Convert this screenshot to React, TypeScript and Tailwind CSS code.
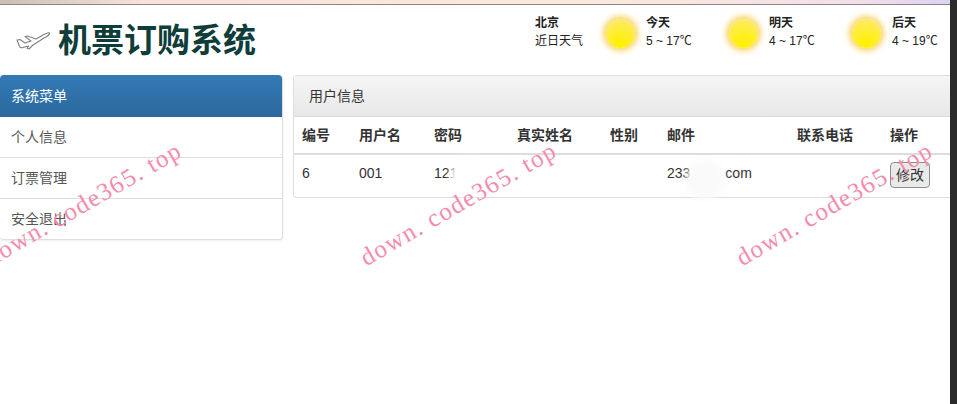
const cjk = "font-['Liberation_Sans','Noto_Sans_CJK_SC',sans-serif]";

const columns = [
  { label: "编号", width: "w-[57px]" },
  { label: "用户名", width: "w-[75px]" },
  { label: "密码", width: "w-[83px]" },
  { label: "真实姓名", width: "w-[93px]" },
  { label: "性别", width: "w-[57px]" },
  { label: "邮件", width: "w-[130px]" },
  { label: "联系电话", width: "w-[93px]" },
  { label: "操作", width: "w-[60px]" },
];

const forecast = [
  { day: "今天", temp: "5 ~ 17℃", width: "w-[123px]" },
  { day: "明天", temp: "4 ~ 17℃", width: "w-[123px]" },
  { day: "后天", temp: "4 ~ 19℃", width: "w-[100px]" },
];

const Sun = () => (
  <div className="w-[29px] h-[29px] shrink-0 rounded-full bg-[radial-gradient(circle_at_50%_85%,#fff000_0%,#ffee30_45%,#fbe880_100%)] shadow-[0_0_6px_3px_#f6d468]" />
);

const Watermark = ({ className }: { className: string }) => (
  <div
    className={`absolute whitespace-nowrap font-['Liberation_Serif',serif] text-[25px] leading-none tracking-[1.4px] text-[#f58cab] -rotate-[30deg] origin-center ${className}`}
  >
    down. code365. top
  </div>
);

const App = () => {
  return (
    <div className={`relative flex w-[957px] h-[404px] overflow-hidden bg-white ${cjk}`}>
      <div className="flex flex-col w-[950px] shrink-0">
        <div className="h-[5px] shrink-0 border-b border-[#8d8380] bg-[linear-gradient(90deg,#c9bfb6_0%,#f8e2da_15%,#fbeadb_60%,#f3dfe8_90%,#dcd2f2_100%)]" />

        <header className="flex h-[70px] shrink-0">
          <div className="flex items-center pl-[16px] pt-[1px] w-[535px] shrink-0">
            <svg width="34" height="22" viewBox="0 0 34 22" fill="#fff" stroke="#808080" strokeWidth="1.1" strokeLinejoin="round">
              <path d="M1 10 L4 9.5 L9 13 L15 11 L9 6.5 L11.5 6 L20 9 L28 4.5 C30 3.4 33 2.5 33.5 3 C34 4 31 6.5 28 8 L17 15 L13 19 L11 18.5 L12.5 16 L7 17.5 C5.5 18 4 17.5 3.5 16.5 Z" />
            </svg>
            <h1 className="ml-[8px] text-[33px] leading-none font-bold text-[#0e3d3a]">机票订购系统</h1>
          </div>
          <div className="flex pt-[9px] text-[12px] leading-[18px] text-[#222]">
            <div className="w-[71px]">
              <p className="font-bold">北京</p>
              <p>近日天气</p>
            </div>
            {forecast.map((item) => (
              <div key={item.day} className={`flex ${item.width}`}>
                <div className="pt-[5px]">
                  <Sun />
                </div>
                <div className="ml-[11px]">
                  <p className="font-bold">{item.day}</p>
                  <p>{item.temp}</p>
                </div>
              </div>
            ))}
          </div>
        </header>

        <main className="flex items-start">
          <aside className="w-[283px] shrink-0 rounded-[4px] border-r border-b border-[#dddddd] shadow-[0_1px_2px_rgba(0,0,0,0.08)] text-[14px]">
            <div className="flex items-center h-[42px] pl-[11px] rounded-t-[4px] text-white bg-[linear-gradient(180deg,#337ab7_0%,#2b689c_100%)]">
              系统菜单
            </div>
            {["个人信息", "订票管理", "安全退出"].map((item, index) => (
              <div
                key={item}
                className={`flex items-center pl-[11px] text-[#555] ${index < 2 ? "h-[41px] border-b border-[#dddddd]" : "h-[40px]"}`}
              >
                {item}
              </div>
            ))}
          </aside>

          <section className="ml-[10px] flex-1 rounded-l-[4px] border-l border-t border-b border-[#dddddd] text-[14px] text-[#333]">
            <div className="flex items-center h-[41px] pl-[15px] bg-[linear-gradient(180deg,#f5f5f5_0%,#e8e8e8_100%)] border-b border-[#dddddd]">
              用户信息
            </div>
            <div className="flex items-center h-[38px] pl-[8px] border-b-2 border-[#dddddd] font-bold">
              {columns.map((col) => (
                <div key={col.label} className={`${col.width} shrink-0`}>{col.label}</div>
              ))}
            </div>
            <div className="flex h-[42px] pl-[8px]">
              <div className="w-[57px] pt-[8px]">6</div>
              <div className="w-[75px] pt-[8px]">001</div>
              <div className="w-[83px] pt-[8px]">121</div>
              <div className="w-[93px]" />
              <div className="w-[57px]" />
              <div className="w-[130px] pt-[8px] flex">
                <span>233</span>
                <span className="ml-[35px]">com</span>
              </div>
              <div className="w-[93px]" />
              <div className="pt-[7px]">
                <button className="h-[26px] w-[40px] rounded-[4px] border border-[#8f8f8f] bg-[#e9e9e9] text-[14px] text-[#333]">修改</button>
              </div>
            </div>
          </section>
        </main>
      </div>
      <div className="flex-1 bg-[#2a2a2a]" />

      <div className="absolute left-[450px] top-[157px] w-[40px] h-[40px] rounded-full bg-white blur-[3px]" />
      <div className="absolute left-[686px] top-[160px] w-[38px] h-[40px] rounded-full bg-[#fafafa] blur-[3px]" />

      <Watermark className="left-[-28px] top-[191px]" />
      <Watermark className="left-[347px] top-[191px]" />
      <Watermark className="left-[723px] top-[191px]" />
    </div>
  );
};

export default App;
